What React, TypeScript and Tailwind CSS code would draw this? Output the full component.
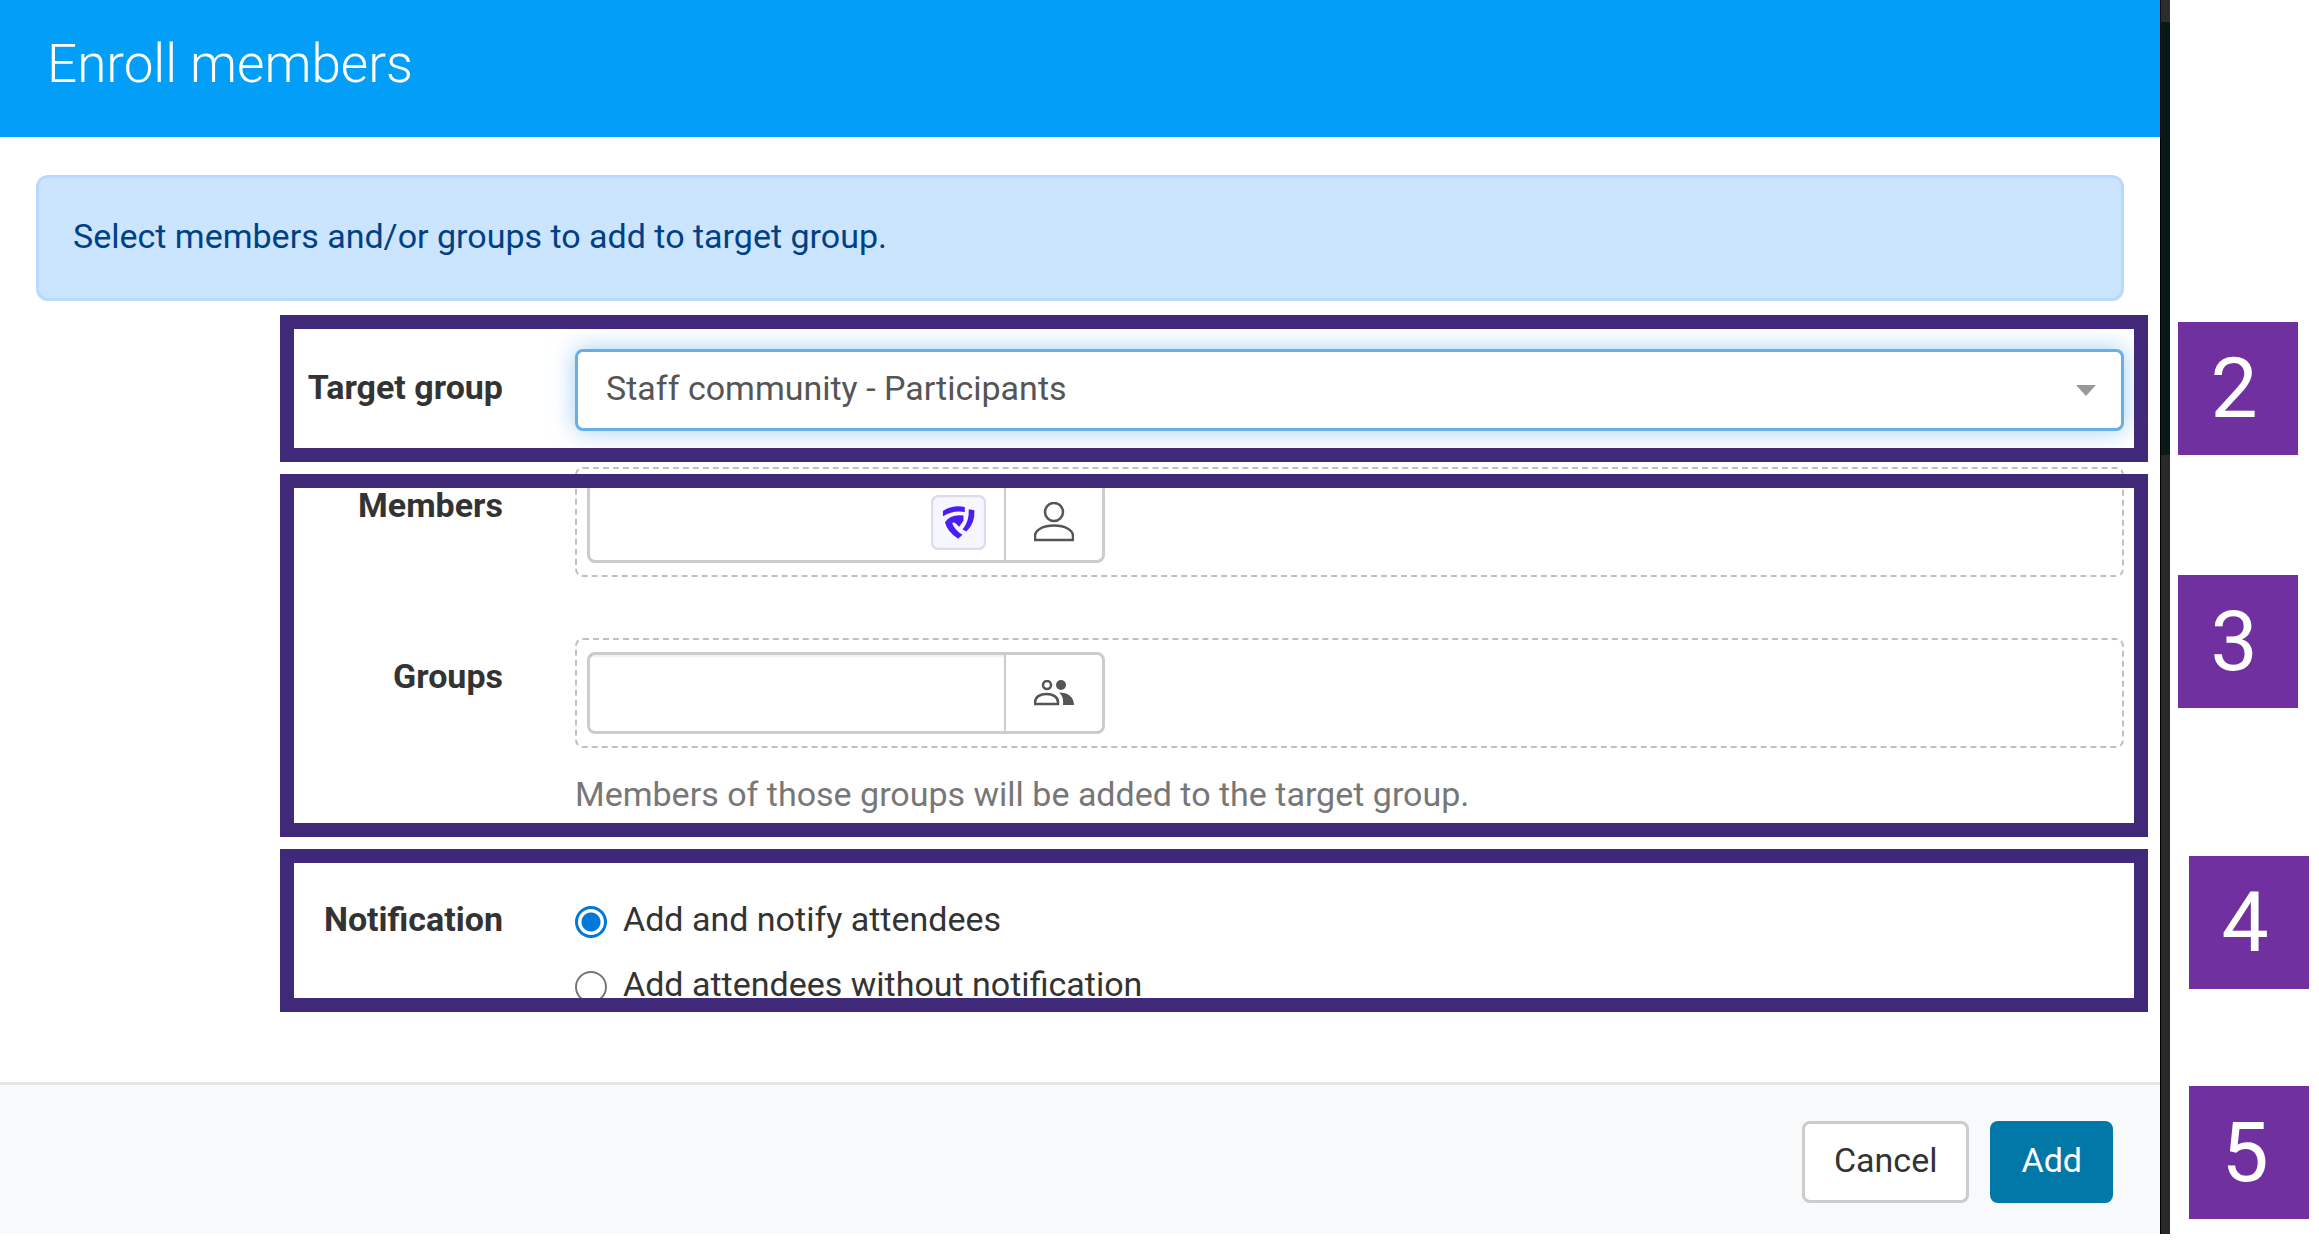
import React, { useState } from 'react'

function UserIcon() {
  return (
    <svg width="40" height="40" viewBox="0 0 40 40" fill="none" stroke="#555555" strokeWidth="2.500" aria-hidden="true">
      <circle cx="20" cy="10" r="9" />
      <path d="M1 38 V34 C1 28 9 23.5 20 23.5 S39 28 39 34 V38 Z" />
    </svg>
  )
}

function GroupIcon() {
  return (
    <svg width="40" height="26" viewBox="0 0 40 26" fill="none" stroke="#555555" strokeWidth="2.500" aria-hidden="true">
      <circle cx="13" cy="5" r="4" />
      <path d="M1 24 V22 C1 17 6 14 12.5 14 S24 17 24 22 V24 Z" />
      <circle cx="27" cy="5" r="5" fill="#555555" stroke="none" />
      <path d="M25 12.5 C34 12.5 40 17 40 25 H29 C29.500 20 29 16 25 12.500 Z" fill="#555555" stroke="none" />
    </svg>
  )
}

function ShieldLogo() {
  return (
    <svg width="55" height="55" viewBox="0 0 166 166" aria-hidden="true">
      <rect x="3" y="3" width="160" height="160" rx="20" fill="#f6f6fe" stroke="#dcdcee" strokeWidth="7" />
      <g fill="#4b1df5">
        <path d="M36 48 Q66 29 102 36 L102 51 Q66 45 36 64 Z" />
        <path d="M42 82 Q60 56 98 62 L98 78 L85 96 L72 84 Q67 81 64 86 Q74 108 95 120 L82 132 Q50 112 42 82 Z" />
        <path d="M114 43 L131 46 Q133 86 107 110 L95 104 Q116 80 114 43 Z" />
      </g>
    </svg>
  )
}

const labelClass = 'pt-[14px] text-right font-bold text-[#333333]'
const rowClass = 'grid grid-cols-[467px_minmax(0,1fr)] gap-x-[72px]'
const highlightClass = 'pointer-events-none absolute left-[244px] -right-6 border-14 border-[#402978]'

interface PickerProps {
  id: string
  label: string
  buttonLabel: string
  icon: React.ReactNode
  badge?: React.ReactNode
}

function PickerRow({ id, label, buttonLabel, icon, badge }: PickerProps) {
  return (
    <div className={rowClass}>
      <label htmlFor={id} className={labelClass}>{label}</label>
      <div className="rounded-lg border-2 border-dashed border-[#c0c0c0] px-[10px] py-3">
        <div className="flex h-[82px] w-[518px] rounded-lg border-[3px] border-[#cccccc] bg-white">
          <div className="flex flex-1 items-center pr-[18px] shadow-[inset_0_2px_2px_rgba(0,0,0,0.06)]">
            <input id={id} type="text" className="h-full w-full min-w-0 flex-1 bg-transparent px-7 text-[#555555] outline-none" />
            {badge}
          </div>
          <button type="button" aria-label={buttonLabel} className="flex w-[98px] items-center justify-center border-l-2 border-[#cccccc]">
            {icon}
          </button>
        </div>
      </div>
    </div>
  )
}

const notifyOptions = [
  { value: 'notify', label: 'Add and notify attendees' },
  { value: 'silent', label: 'Add attendees without notification' },
]

const callouts = [
  { number: 2, place: 'mt-[322px] ml-2' },
  { number: 3, place: 'mt-[120px] ml-2' },
  { number: 4, place: 'mt-[148px] ml-[19px]' },
  { number: 5, place: 'mt-[97px] ml-[19px]' },
]

export default function App() {
  const [notify, setNotify] = useState('notify')

  return (
    <div className="flex min-h-screen items-start bg-white font-[Roboto,sans-serif] text-[34px] leading-[48px]">
      <form className="min-w-0 flex-1" onSubmit={(e) => e.preventDefault()}>
        {/* Header */}
        <header className="bg-[#039ef7] px-[47px] pt-7 pb-[37px]">
          <h1 className="text-[53px] leading-[72px] font-light text-white">Enroll members</h1>
        </header>

        {/* Body */}
        <div className="px-9 pt-[38px] pb-[74px]">
          <div className="rounded-xl border-[3px] border-[#b8daff] bg-[#cce5ff] px-[34px] pt-[34px] pb-[38px] text-[#004085]">
            Select members and/or groups to add to target group.
          </div>

          <section className="relative mt-12">
            <div className={rowClass}>
              <label htmlFor="target" className={labelClass}>Target group</label>
              <div className="relative">
                <select
                  id="target"
                  className="h-[82px] w-full appearance-none rounded-lg border-[3px] border-[#66afe9] bg-white px-7 pb-1 text-[#555555] shadow-[0_0_24px_rgba(102,175,233,0.6)] outline-none"
                >
                  <option>Staff community - Participants</option>
                </select>
                <svg className="pointer-events-none absolute top-9 right-7" width="20" height="11" viewBox="0 0 20 11" aria-hidden="true">
                  <path d="M0 0 H20 L10 11 Z" fill="#999999" />
                </svg>
              </div>
            </div>
            <div className={`${highlightClass} -top-[34px] -bottom-[31px]`}></div>
          </section>

          <section className="relative mt-9">
            <PickerRow id="members" label="Members" buttonLabel="Choose members" icon={<UserIcon />} badge={<ShieldLogo />} />
            <div className="mt-[61px]">
              <PickerRow id="groups" label="Groups" buttonLabel="Choose groups" icon={<GroupIcon />} />
            </div>
            <div className={`${rowClass} mt-[22px]`}>
              <p className="col-start-2 text-[#777777]">Members of those groups will be added to the target group.</p>
            </div>
            <div className={`${highlightClass} top-[7px] -bottom-[19px]`}></div>
          </section>

          <section className="relative mt-[77px]">
            <div className={rowClass} role="radiogroup" aria-labelledby="notification">
              <span id="notification" className="text-right font-bold text-[#333333]">Notification</span>
              <div className="flex flex-col items-start gap-[17px] text-[#333333]">
                {notifyOptions.map((option) => (
                  <label key={option.value} className="flex items-center gap-4">
                    <input
                      type="radio"
                      name="notify"
                      value={option.value}
                      checked={notify === option.value}
                      onChange={() => setNotify(option.value)}
                      className="mt-1.5 size-8 appearance-none rounded-full border-2 border-[#767676] bg-white checked:border-[3px] checked:border-[#0078d7] checked:bg-[radial-gradient(circle,#0078d7_9px,#ffffff_10px)]"
                    />
                    {option.label}
                  </label>
                ))}
              </div>
            </div>
            <div className={`${highlightClass} -top-[46px] -bottom-1`}></div>
          </section>
        </div>

        {/* Footer */}
        <footer className="flex justify-end gap-[21px] border-t-[3px] border-[#e5e5e5] bg-[#f8f9fb] pt-9 pr-[47px] pb-[31px]">
          <button type="button" className="h-[82px] rounded-lg border-[3px] border-[#cccccc] bg-white px-[29px] pb-[5px] text-[#333333]">
            Cancel
          </button>
          <button type="submit" className="h-[82px] rounded-lg bg-[#0278a8] px-[31px] pb-[5px] text-white">
            Add
          </button>
        </footer>
      </form>

      {/* Page behind the dialog */}
      <div className="flex w-[10px] flex-col">
        <div className="h-[22px] border-l border-black bg-[#2d2d2d]"></div>
        <div className="h-[433px] border-l border-black bg-[#081917]"></div>
        <div className="h-[779px] border-l border-black bg-[#292929]"></div>
      </div>

      <aside className="w-[149px] shrink-0">
        {callouts.map((callout) => (
          <div
            key={callout.number}
            className={`${callout.place} flex h-[133px] w-[120px] items-center justify-center bg-[#7030a0] pr-2 text-[84px] leading-none text-white`}
          >
            {callout.number}
          </div>
        ))}
      </aside>
    </div>
  )
}
